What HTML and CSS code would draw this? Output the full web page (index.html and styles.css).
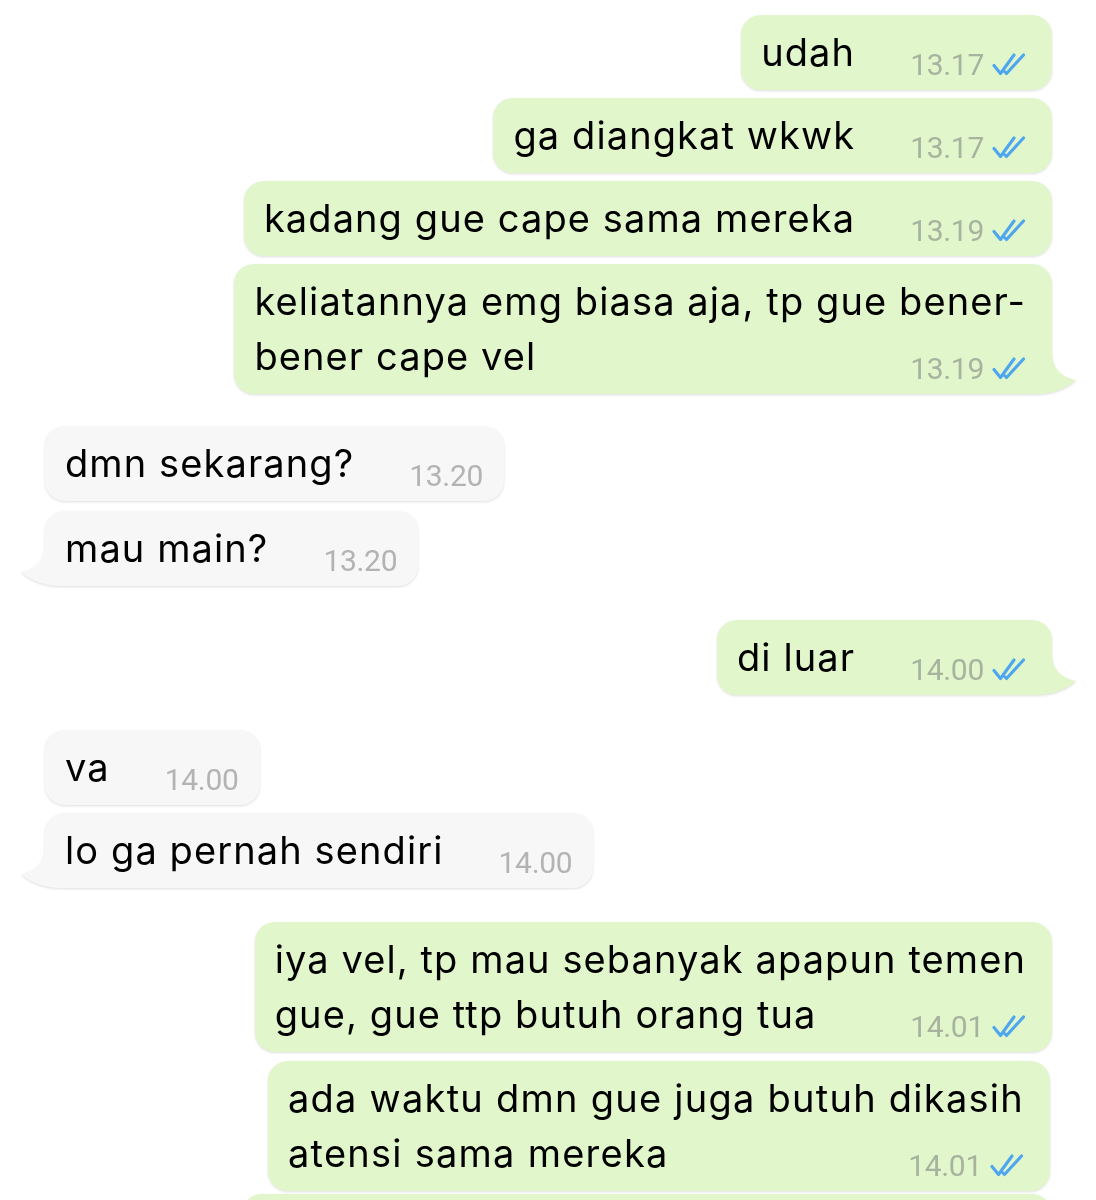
FILE: index.html
```html
<!DOCTYPE html>
<html lang="id">
<head>
<meta charset="utf-8">
<title>Chat</title>
<link rel="stylesheet" href="styles.css">
</head>
<body>
<div class="chat">

  <div class="row out">
    <div class="bubble out">udah<span class="meta"><span class="time">13.17</span><svg class="ticks" viewBox="0 0 34 24"><path d="M2 13.5 L8.5 21.5 L22 3 M13 20 L14.5 21.5 L31.5 3"/></svg></span></div>
  </div>
  <div class="row out">
    <div class="bubble out">ga diangkat wkwk<span class="meta"><span class="time">13.17</span><svg class="ticks" viewBox="0 0 34 24"><path d="M2 13.5 L8.5 21.5 L22 3 M13 20 L14.5 21.5 L31.5 3"/></svg></span></div>
  </div>
  <div class="row out">
    <div class="bubble out">kadang gue cape sama mereka<span class="meta"><span class="time">13.19</span><svg class="ticks" viewBox="0 0 34 24"><path d="M2 13.5 L8.5 21.5 L22 3 M13 20 L14.5 21.5 L31.5 3"/></svg></span></div>
  </div>
  <div class="row out">
    <div class="bubble out">keliatannya emg biasa aja, tp gue bener-<br>bener cape vel<span class="meta"><span class="time">13.19</span><svg class="ticks" viewBox="0 0 34 24"><path d="M2 13.5 L8.5 21.5 L22 3 M13 20 L14.5 21.5 L31.5 3"/></svg></span><svg class="tail tail-out" viewBox="0 0 44 42"><path d="M0 0 H20 C20 14 26 24 44 28 C33 38 18 42 4 42 H0 Z"/></svg></div>
  </div>

  <div class="row in gap-32">
    <div class="bubble in">dmn sekarang?<span class="meta"><span class="time">13.20</span></span></div>
  </div>
  <div class="row in gap-10">
    <div class="bubble in">mau main?<span class="meta"><span class="time">13.20</span></span><svg class="tail tail-in" viewBox="0 0 44 42"><path d="M0 0 H20 C20 14 26 24 44 28 C33 38 18 42 4 42 H0 Z"/></svg></div>
  </div>

  <div class="row out gap-34">
    <div class="bubble out">di luar<span class="meta"><span class="time">14.00</span><svg class="ticks" viewBox="0 0 34 24"><path d="M2 13.5 L8.5 21.5 L22 3 M13 20 L14.5 21.5 L31.5 3"/></svg></span><svg class="tail tail-out" viewBox="0 0 44 42"><path d="M0 0 H20 C20 14 26 24 44 28 C33 38 18 42 4 42 H0 Z"/></svg></div>
  </div>

  <div class="row in gap-35">
    <div class="bubble in">va<span class="meta"><span class="time">14.00</span></span></div>
  </div>
  <div class="row in">
    <div class="bubble in">lo ga pernah sendiri<span class="meta"><span class="time">14.00</span></span><svg class="tail tail-in" viewBox="0 0 44 42"><path d="M0 0 H20 C20 14 26 24 44 28 C33 38 18 42 4 42 H0 Z"/></svg></div>
  </div>

  <div class="row out gap-34">
    <div class="bubble out">iya vel, tp mau sebanyak apapun temen<br>gue, gue ttp butuh orang tua<span class="meta"><span class="time">14.01</span><svg class="ticks" viewBox="0 0 34 24"><path d="M2 13.5 L8.5 21.5 L22 3 M13 20 L14.5 21.5 L31.5 3"/></svg></span></div>
  </div>
  <div class="row out gap-9">
    <div class="bubble out narrow">ada waktu dmn gue juga butuh dikasih<br>atensi sama mereka<span class="meta"><span class="time">14.01</span><svg class="ticks" viewBox="0 0 34 24"><path d="M2 13.5 L8.5 21.5 L22 3 M13 20 L14.5 21.5 L31.5 3"/></svg></span></div>
  </div>
  <div class="row out gap-3">
    <div class="bubble out peek"></div>
  </div>

</div>
</body>
</html>
```

FILE: styles.css
```css
html, body {
  margin: 0;
  padding: 0;
  background: #ffffff;
  height: 1200px;
  overflow: hidden;
}

.chat {
  display: flex;
  flex-direction: column;
  padding: 15px 44px 0 45px;
  font-family: Inter, "Noto Sans", "DejaVu Sans", sans-serif;
  color: #000;
}

.row {
  display: flex;
  margin-top: 8px;
}
.row:first-child { margin-top: 0; }
.row.gap-3 { margin-top: 3px; }
.row.gap-9 { margin-top: 9px; }
.row.gap-10 { margin-top: 10px; }
.row.gap-32 { margin-top: 32px; }
.row.gap-34 { margin-top: 34px; }
.row.gap-35 { margin-top: 35px; }
.row.out { justify-content: flex-end; }
.row.in { justify-content: flex-start; }

.bubble {
  position: relative;
  font-size: 38px;
  letter-spacing: 1.1px;
  line-height: 55px;
  padding: 10px 26px 10px 20px;
  border-radius: 20px;
  filter: drop-shadow(0 1px 1px rgba(0, 0, 0, 0.13));
  white-space: nowrap;
}
.bubble.out { background: #e1f7cb; }
.bubble.in { background: #f7f7f7; padding-right: 21px; }

.bubble.narrow {
  letter-spacing: 1.25px;
  margin-right: 2px;
}

.meta {
  float: right;
  height: 55px;
  margin-left: 55px;
  display: flex;
  align-items: flex-end;
  gap: 8px;
  letter-spacing: 0;
}

.time {
  font-family: Roboto, Inter, sans-serif;
  font-size: 30px;
  line-height: 30px;
  letter-spacing: -0.3px;
  color: #a7b29f;
}
.bubble.in .time { color: #b3b3b3; }

.ticks {
  width: 34px;
  height: 24px;
  margin-bottom: 4px;
}
.ticks path {
  fill: none;
  stroke: #4ea6ee;
  stroke-width: 3.1;
  stroke-linecap: round;
  stroke-linejoin: round;
}

.tail {
  position: absolute;
  bottom: 0;
  width: 44px;
  height: 42px;
}
.tail-out {
  right: -24px;
}
.tail-out path { fill: #e1f7cb; }
.tail-in {
  left: -24px;
  transform: scaleX(-1);
}
.tail-in path { fill: #f7f7f7; }

.bubble.peek {
  width: 810px;
  height: 55px;
  padding: 10px 0;
}
```
